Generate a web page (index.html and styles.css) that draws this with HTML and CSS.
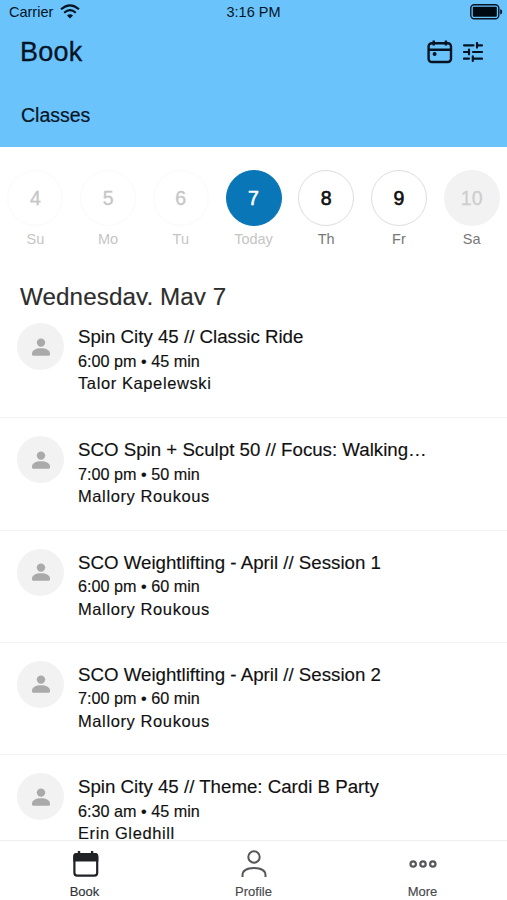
FILE: index.html
```html
<!DOCTYPE html>
<html lang="en">
<head>
<meta charset="utf-8">
<meta name="viewport" content="width=device-width">
<title>Book</title>
<link rel="stylesheet" href="styles.css">
</head>
<body>
<svg class="defs" width="0" height="0">
  <symbol id="person" viewBox="0 0 18 18"><circle cx="9" cy="4.600" r="4.200"/><path d="M0 15.800C0 12 3.800 10.200 9 10.200s9 1.800 9 5.600v.4q0 1.600-1.700 1.600H1.700Q0 17.800 0 16.200z"/></symbol>
</svg>
<div class="app">
  <header class="header">
    <div class="status">
      <div class="carrier"><span>Carrier</span>
        <svg width="20" height="15" viewBox="0 0 20 15"><g fill="none" stroke="#041424" stroke-width="2.100"><path d="M1 5.300Q10-2.700 19 5.300"/><path d="M4.200 8.700q5.800-5.100 11.600 0"/></g><path d="M10 14.500l-3-3q3-2.400 6 0z" fill="#041424"/></svg>
      </div>
      <div class="time">3:16 PM</div>
      <svg class="battery" width="33" height="16" viewBox="0 0 33 16"><rect x=".8" y=".8" width="28" height="14" rx="3.500" fill="none" stroke="#041424" stroke-width="1.400"/><rect x="2.800" y="2.800" width="24" height="10" rx="1" fill="#000a12"/><path d="M30.200 5q2 .4 2 2.800t-2 2.800z" fill="#041424"/></svg>
    </div>
    <div class="titlebar">
      <h1>Book</h1>
      <div class="actions">
        <svg width="26" height="24" viewBox="0 0 26 24" fill="none" stroke="#041424" stroke-width="2.400"><rect x="1.600" y="3.200" width="22.400" height="18.800" rx="3.200"/><path d="M1.600 9.800H24M6.700.6v5M18.900.6v5"/><circle cx="7.600" cy="14" r="2" fill="#041424" stroke="none"/></svg>
        <svg width="20" height="20" viewBox="0 0 20 20" fill="none" stroke="#041424" stroke-width="2.200" stroke-linecap="round"><path d="M1 3.300h9.500M14.500 3.300H19M14 1v4.600M1 10h4.500M6 7.700v4.600M10 10h9M1 16.600h5M9.800 14.300v4.600M10.500 16.600H19"/></svg>
      </div>
    </div>
    <h2>Classes</h2>
  </header>
  <nav class="days">
    <div class="day past"><b>4</b><span>Su</span></div>
    <div class="day past"><b>5</b><span>Mo</span></div>
    <div class="day past"><b>6</b><span>Tu</span></div>
    <div class="day today"><b>7</b><span>Today</span></div>
    <div class="day"><b>8</b><span>Th</span></div>
    <div class="day"><b>9</b><span>Fr</span></div>
    <div class="day closed"><b>10</b><span>Sa</span></div>
  </nav>
  <main class="schedule">
    <h3>Wednesday, May 7</h3>
    <article class="row"><div class="avatar"><svg width="18" height="18"><use href="#person"/></svg></div><div class="info"><h4>Spin City 45 // Classic Ride</h4><p>6:00 pm • 45 min</p><p class="coach wide">Talor Kapelewski</p></div></article>
    <article class="row"><div class="avatar"><svg width="18" height="18"><use href="#person"/></svg></div><div class="info"><h4>SCO Spin + Sculpt 50 // Focus: Walking…</h4><p>7:00 pm • 50 min</p><p class="coach">Mallory Roukous</p></div></article>
    <article class="row"><div class="avatar"><svg width="18" height="18"><use href="#person"/></svg></div><div class="info"><h4>SCO Weightlifting - April // Session 1</h4><p>6:00 pm • 60 min</p><p class="coach">Mallory Roukous</p></div></article>
    <article class="row"><div class="avatar"><svg width="18" height="18"><use href="#person"/></svg></div><div class="info"><h4>SCO Weightlifting - April // Session 2</h4><p>7:00 pm • 60 min</p><p class="coach">Mallory Roukous</p></div></article>
    <article class="row"><div class="avatar"><svg width="18" height="18"><use href="#person"/></svg></div><div class="info"><h4>Spin City 45 // Theme: Cardi B Party</h4><p>6:30 am • 45 min</p><p class="coach">Erin Gledhill</p></div></article>
  </main>
  <nav class="tabs">
    <div class="tab active"><svg width="28" height="28" viewBox="0 0 28 28"><rect x="3.400" y="4.200" width="22.800" height="21.400" rx="2.800" fill="none" stroke="#202226" stroke-width="2.200"/><path d="M2.300 11.600V6q0-3 3-3h19q3 0 3 3v5.600zM6.800 1h2.400v3H6.800zM19.900 1h2.400v3h-2.400z" fill="#202226"/></svg><span>Book</span></div>
    <div class="tab"><svg width="28" height="28" viewBox="0 0 28 28" fill="none" stroke="#55575a" stroke-width="2"><circle cx="14" cy="7" r="5.700"/><path d="M2.500 27v-1.500C2.500 20.800 6.500 18 14 18s11.500 2.800 11.500 7.500V27"/></svg><span>Profile</span></div>
    <div class="tab"><svg width="28" height="28" viewBox="0 0 28 28" fill="none" stroke="#55575a" stroke-width="2.200"><circle cx="4.200" cy="14" r="2.700"/><circle cx="14" cy="14" r="2.700"/><circle cx="23.800" cy="14" r="2.700"/></svg><span>More</span></div>
  </nav>
</div>
</body>
</html>
```
FILE: styles.css
```css
* { box-sizing: border-box; margin: 0; padding: 0; }
body { font-family: "Liberation Sans", Arial, sans-serif; background: #fff; color: #111; overflow: hidden; }
h1, h2, h3, h4, b { font-weight: 400; }
svg { display: block; flex: none; }
.defs { position: absolute; }
.app { width: 507px; height: 900px; display: flex; flex-direction: column; overflow: hidden; }
.header { height: 147px; flex: none; background: #6bc3fc; color: #041424; }
.status { height: 24px; display: grid; grid-template-columns: 1fr auto 1fr; align-items: center; padding: 0 4px 0 9px; font-size: 14.500px; }
.carrier { display: flex; align-items: center; gap: 7px; }
.carrier svg { margin-top: -1px; }
.time { padding-right: 5px; }
.battery { justify-self: end; }
.titlebar { height: 56px; padding: 0 24px 0 20px; display: flex; justify-content: space-between; align-items: center; }
h1 { font-size: 27px; letter-spacing: .2px; -webkit-text-stroke: .3px; }
.actions { display: flex; align-items: center; gap: 10px; }
h2 { font-size: 19.500px; line-height: 24px; margin: 23px 0 0 21px; -webkit-text-stroke: .2px; }
.days { height: 123px; flex: none; display: flex; padding: 23px 0 0; width: 509px; margin-left: -1px; }
.day { flex: 1; display: flex; flex-direction: column; align-items: center; color: #777; }
.day b { width: 56px; height: 56px; border: 1px solid #ddd; border-radius: 50%; display: flex; align-items: center; justify-content: center; font-size: 19.500px; color: #111; -webkit-text-stroke: .6px; }
.day span { font-size: 14.500px; line-height: 18px; margin-top: 4px; }
.past, .today { color: #c5c5c5; }
.past b { color: #c6c6c6; border-color: #fafafa; -webkit-text-stroke: .3px; }
.today b { background: #0876b7; border-color: #0876b7; color: #fff; }
.closed b { color: #cecece; background: #f2f2f2; border-color: #f2f2f2; -webkit-text-stroke: .3px; }
.schedule { flex: 1; min-height: 0; overflow: hidden; padding-top: 12px; }
h3 { height: 23px; line-height: 29px; overflow: hidden; font-size: 24.200px; letter-spacing: .1px; padding-left: 20px; color: #2d2d2d; -webkit-text-stroke: .15px; }
.row { height: 112.400px; display: flex; gap: 14px; padding: 18px 17px 0; border-bottom: 1px solid #f3f3f3; }
.row:nth-of-type(1) { height: 113.200px; }
.avatar { width: 47px; height: 47px; flex: none; border-radius: 50%; background: #f2f2f2; display: grid; place-items: center; fill: #aaa; }
.info { min-width: 0; white-space: nowrap; -webkit-text-stroke: .15px; }
h4 { font-size: 18.700px; line-height: 24px; margin-top: 2px; }
.info p { font-size: 16.200px; line-height: 22.500px; margin-top: .5px; }
.info .coach { font-size: 16.500px; letter-spacing: .6px; margin-top: 0; }
.tabs { height: 60px; flex: none; display: flex; border-top: 1px solid #eee; background: #fff; }
.tab { flex: 1; display: flex; flex-direction: column; align-items: center; padding-top: 9px; color: #48494b; font-size: 13px; -webkit-text-stroke: .15px; }
.tab span { line-height: 16px; margin-top: 5.500px; }
.active { color: #303236; }
```
